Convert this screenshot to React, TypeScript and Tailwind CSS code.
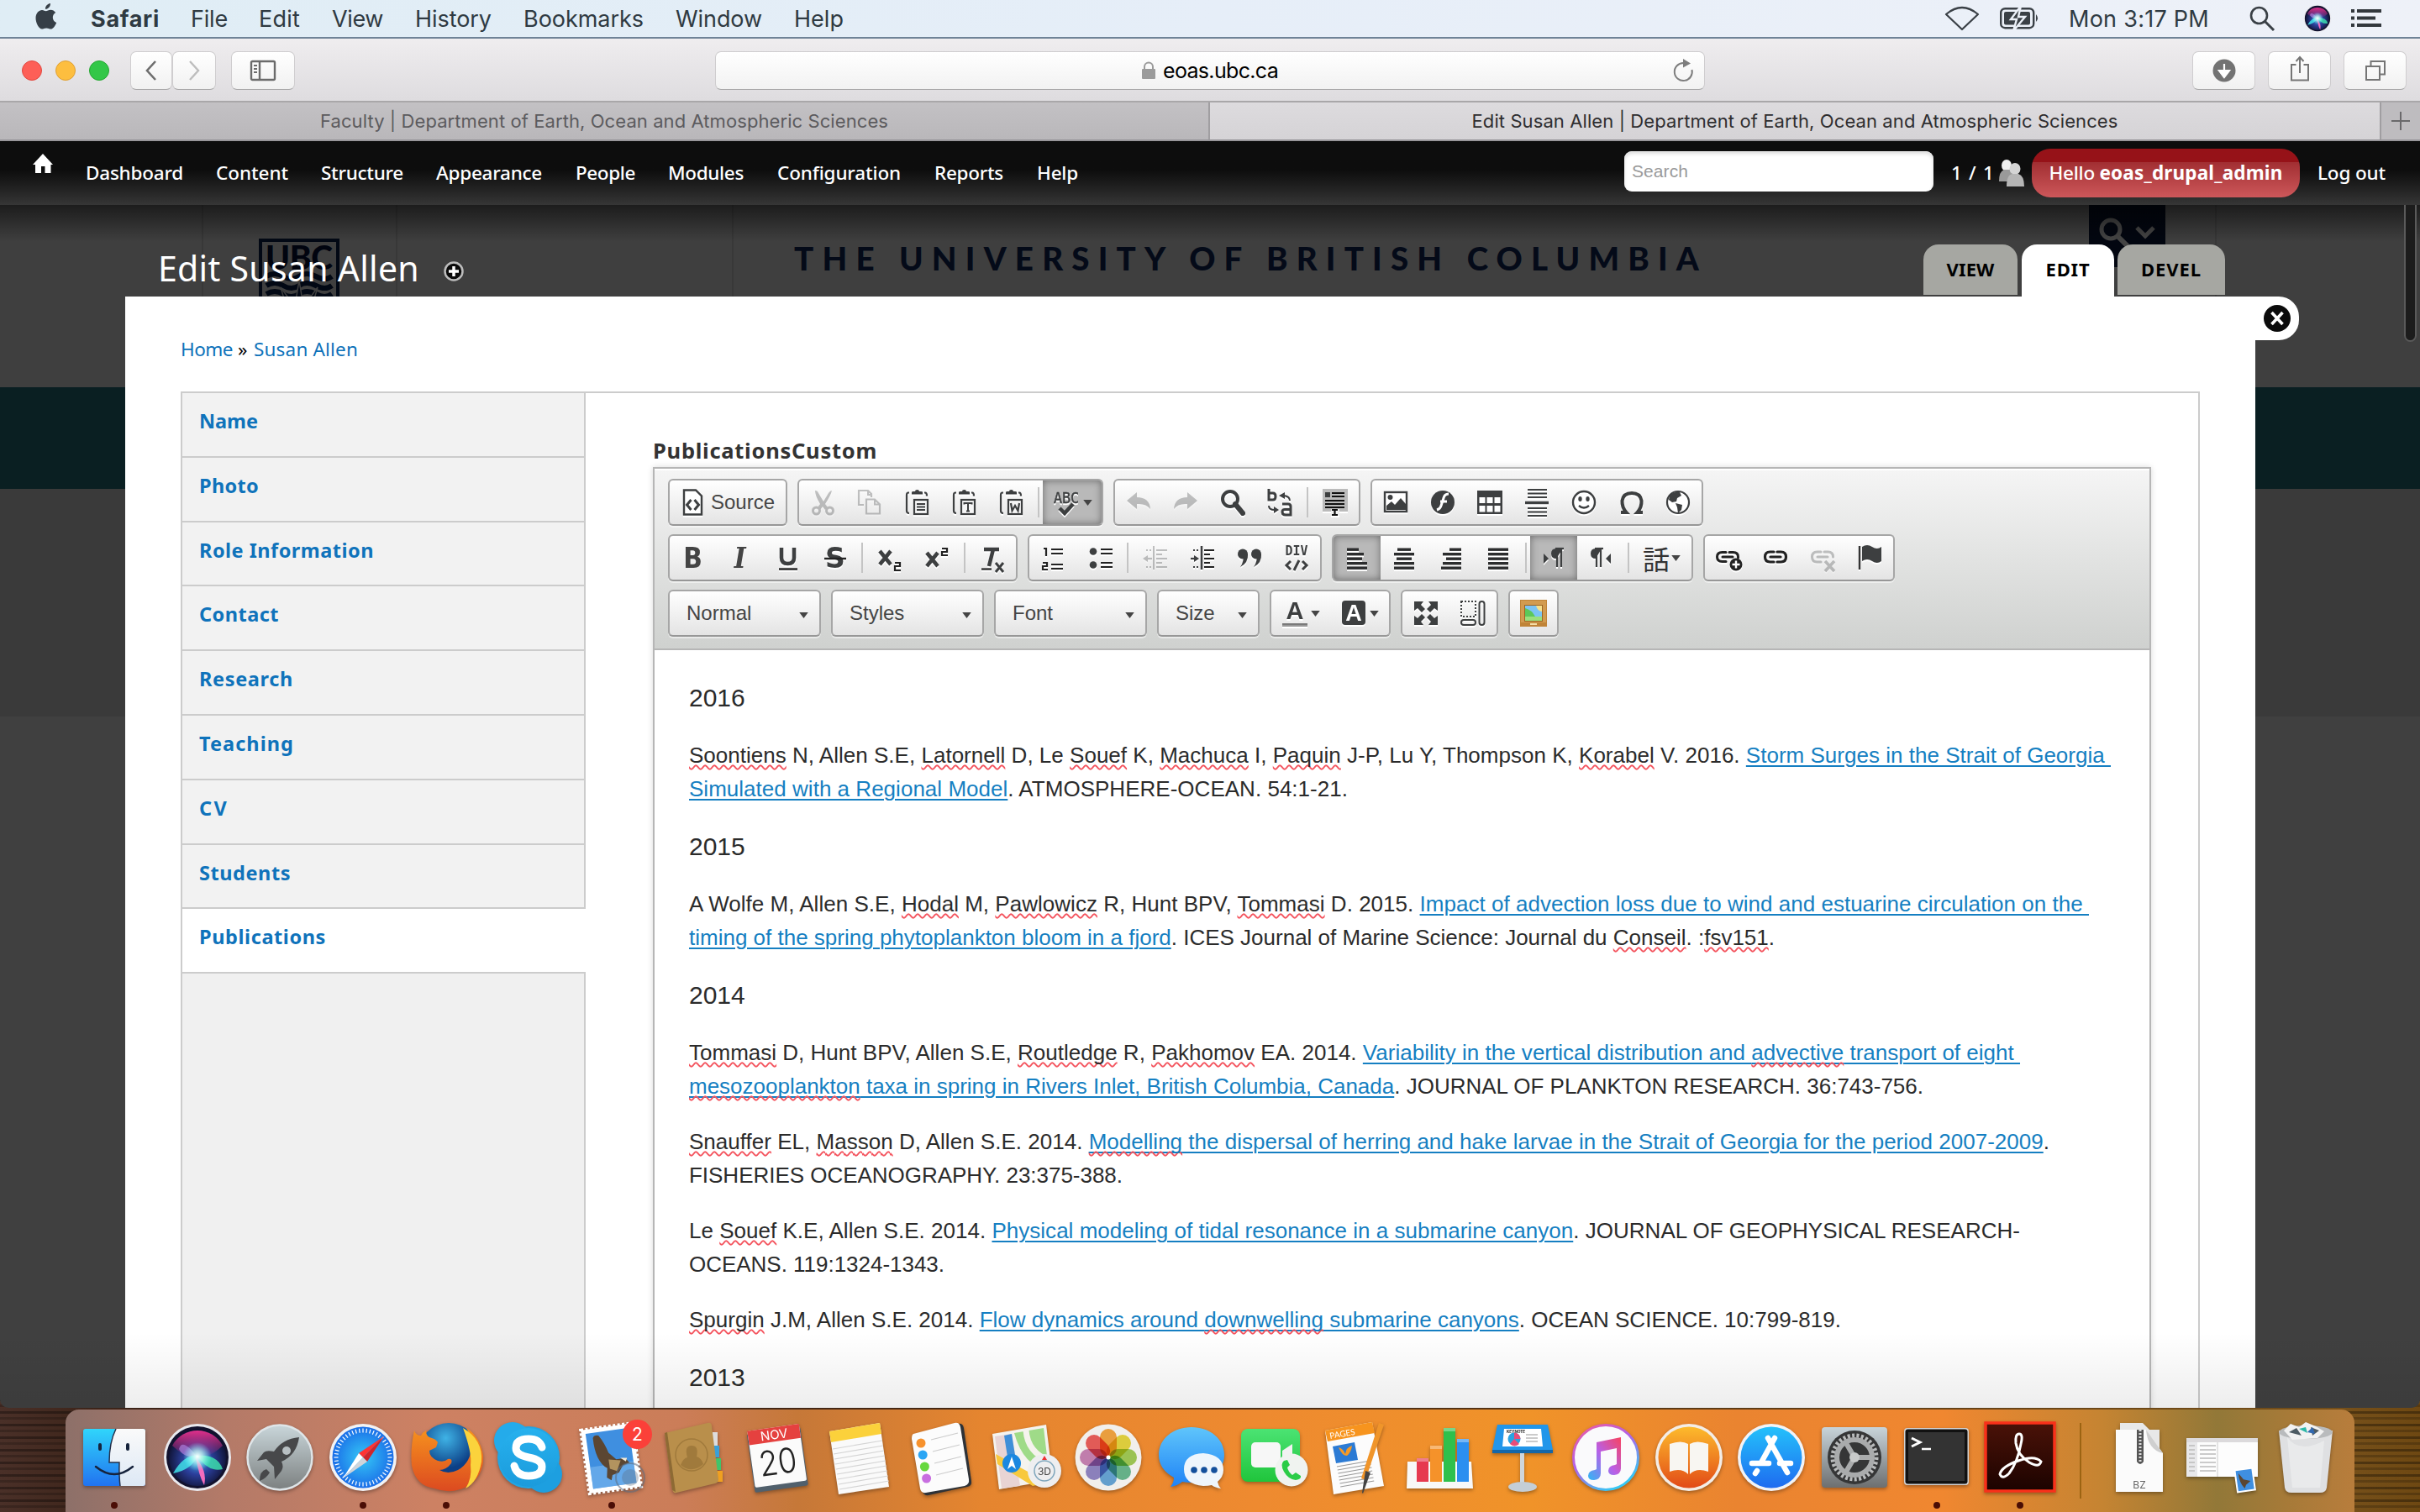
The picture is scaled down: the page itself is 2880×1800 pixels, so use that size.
import React, { useLayoutEffect, useRef, useState } from 'react';

const SF = "[font-family:Inter,'Liberation_Sans',sans-serif]";
const LUCIDA = "[font-family:'Noto_Sans','DejaVu_Sans',sans-serif]";
const HELV = "[font-family:'Liberation_Sans',Arial,sans-serif]";

/** A single line of text whose tracking is adjusted so it fills a given width. */
function Fit({ w, className = '', children }: { w: number; className?: string; children: React.ReactNode }) {
  const ref = useRef<HTMLSpanElement>(null);
  const [spacing, setSpacing] = useState(0);
  useLayoutEffect(() => {
    const el = ref.current;
    if (!el) return;
    const chars = (el.textContent || '').length;
    el.style.letterSpacing = '0px';
    const natural = el.getBoundingClientRect().width;
    setSpacing((w - natural) / Math.max(1, chars));
    el.style.letterSpacing = `${(w - natural) / Math.max(1, chars)}px`;
  }, [w]);
  return (
    <span ref={ref} className={`inline-block whitespace-pre ${className}`} style={{ letterSpacing: spacing }}>
      {children}
    </span>
  );
}

/* ---------------------------------------------------------------- menu bar */

const menus: [string, number, number][] = [
  ['File', 44, 37],
  ['Edit', 49, 38],
  ['View', 61, 38],
  ['History', 91, 38],
  ['Bookmarks', 143, 38],
  ['Window', 103, 38],
  ['Help', 59, 0],
];

function SiriOrb({ className }: { className: string }) {
  return (
    <svg viewBox="0 0 88 88" className={className}>
      <defs>
        <radialGradient id="siriBg" cx="50%" cy="55%" r="55%">
          <stop offset="0" stopColor="#3fb6e8" />
          <stop offset=".45" stopColor="#2b3f9c" />
          <stop offset="1" stopColor="#0d0f2b" />
        </radialGradient>
        <linearGradient id="siriTop" x1="0" y1="0" x2="0" y2="1">
          <stop offset="0" stopColor="#e0308c" />
          <stop offset="1" stopColor="#e0308c" stopOpacity="0" />
        </linearGradient>
        <radialGradient id="siriGlow">
          <stop offset="0" stopColor="#fff" />
          <stop offset=".4" stopColor="#c8fff6" stopOpacity=".7" />
          <stop offset="1" stopColor="#7ff" stopOpacity="0" />
        </radialGradient>
      </defs>
      <circle cx="44" cy="44" r="40" fill="#e9e9ee" />
      <circle cx="44" cy="44" r="37" fill="#12122e" />
      <circle cx="44" cy="44" r="34" fill="url(#siriBg)" />
      <path d="M14 30a34 34 0 0 1 60 0q-14 14-30 14T14 30z" fill="url(#siriTop)" />
      <path d="M44 44Q26 20 22 34q4 10 22 10z" fill="#b58be8" opacity=".6" />
      <path d="M15 63q12-22 30-22-8 18-30 22z" fill="#3fe0e8" opacity=".85" />
      <path d="M44 42q24-2 30 16-18 4-30-16z" fill="#3fe8b0" opacity=".8" />
      <path d="M42 44q14 16 10 33-6-10-10-33z" fill="#ff6fc0" opacity=".95" />
      <circle cx="44" cy="43" r="17" fill="url(#siriGlow)" />
    </svg>
  );
}

function MenuBar() {
  return (
    <div className={`flex h-[46px] shrink-0 items-center border-b-2 border-[#6f8397] bg-linear-to-r from-[#dfedf5] via-[#e6eef8] to-[#eef1f8] text-[27px] leading-[44px] text-[#2f3a42] ${SF}`}>
      <svg viewBox="0 0 28 32" className="ml-[41px] h-8 w-7 -translate-y-0.5" fill="#363f47">
        <path d="M19 0c.3 3.600-2.700 7-6 6.800C12.600 3.500 15.800.3 19 0zM13.600 9.200c1.400 0 3.200-1.500 5.800-1.500 2.100 0 4.400 1.200 5.800 3.300-5 2.900-4.200 10 1 12-1.300 3.300-3.700 7.600-6.700 7.600-2 0-2.900-1.200-5.300-1.200s-3.500 1.200-5.300 1.200C5.400 30.600 1.500 23.700 1.500 17.600c0-6.200 3.900-9.700 7.500-9.700 2 0 3.600 1.300 4.600 1.300z" />
      </svg>
      <Fit w={82} className="ml-[39px] translate-y-px font-bold">Safari</Fit>
      <div className="ml-[37px] flex translate-y-px">
        {menus.map(([t, w, gap]) => (
          <div key={t} className="flex">
            <Fit w={w}>{t}</Fit>
            <span style={{ width: gap }} />
          </div>
        ))}
      </div>
      <div className="flex-1" />
      <svg viewBox="0 0 42 30" className="h-[30px] w-[42px]" fill="none" stroke="#3a4046" strokeWidth="2.200" strokeLinejoin="round">
        <path d="M2 10Q21-6 40 10L21 28z" />
      </svg>
      <svg viewBox="0 0 48 28" className="ml-[24px] h-7 w-12">
        <rect x="1.200" y="2.200" width="39" height="23" rx="5" fill="none" stroke="#3a4046" strokeWidth="2.400" />
        <rect x="5" y="6" width="31" height="15.500" rx="2" fill="#3a4046" />
        <path d="M43 9q4 4.500 0 9z" fill="#3a4046" />
        <path d="M25-1 13 15h7l-4 14 14-17h-8z" fill="#3a4046" stroke="#ebf0f8" strokeWidth="2.400" />
      </svg>
      <Fit w={167} className="ml-[34px] translate-y-px">Mon 3:17 PM</Fit>
      <svg viewBox="0 0 32 32" className="ml-[47px] h-8 w-8" fill="none" stroke="#3a4046" strokeWidth="2.600">
        <circle cx="12.500" cy="12.500" r="9.500" />
        <path d="M19.500 19.500 30 30" strokeWidth="3" />
      </svg>
      <SiriOrb className="ml-[32px] h-[36px] w-[36px]" />
      <svg viewBox="0 0 36 22" className="mr-[46px] ml-[22px] h-[22px] w-9" fill="#33383d">
        <path d="M0 0h4v4H0zM7 0h29v4H7zM0 8.500h4v4H0zM7 8.500h22v4H7zM0 17h4v4H0zM7 17h29v4H7z" />
      </svg>
    </div>
  );
}

/* ---------------------------------------------------------- browser chrome */

function ChromeButton({ className, children }: { className: string; children: React.ReactNode }) {
  return (
    <div className={`flex h-[46px] items-center justify-center rounded-[7px] border border-[#cfcdcf] border-b-[#a8a7a8] bg-linear-to-b from-white to-[#f1f1f1] ${className}`}>
      {children}
    </div>
  );
}

function BrowserToolbar() {
  return (
    <div className="flex h-[76px] shrink-0 items-center border-b-2 border-[#a9a7a9] bg-linear-to-b from-[#efedef] to-[#dedcdf] pt-px">
      <div className="ml-[26px] flex gap-[16px]">
        <div className="h-6 w-6 rounded-full border border-[#e2473f] bg-[#fd5f57]" />
        <div className="h-6 w-6 rounded-full border border-[#dfa034] bg-[#fdbe3f]" />
        <div className="h-6 w-6 rounded-full border border-[#25a732] bg-[#33c748]" />
      </div>
      <ChromeButton className="ml-[25px] w-[50px]">
        <svg viewBox="0 0 16 26" className="h-[26px] w-4" fill="none" stroke="#6e6e6e" strokeWidth="2.600"><path d="M13 2 3 13l10 11" /></svg>
      </ChromeButton>
      <ChromeButton className="w-[52px]">
        <svg viewBox="0 0 16 26" className="h-[26px] w-4" fill="none" stroke="#bdbdbd" strokeWidth="2.400"><path d="m3 2 10 11L3 24" /></svg>
      </ChromeButton>
      <ChromeButton className="ml-[18px] w-[76px]">
        <svg viewBox="0 0 32 26" className="h-[26px] w-8" fill="none" stroke="#6b6b6b" strokeWidth="2.400">
          <rect x="2" y="2" width="28" height="22" rx="1.500" />
          <path d="M12 2v22" />
          <path d="M5 7h4M5 11h4M5 15h4" strokeWidth="2" />
        </svg>
      </ChromeButton>
      <div className="ml-[500px] flex h-[46px] w-[1178px] items-center rounded-[7px] border border-[#cfcdcf] border-b-[#a8a7a8] bg-linear-to-b from-white to-[#f2f2f2]">
        <svg viewBox="0 0 18 22" className="ml-[506px] h-[22px] w-[18px]">
          <path d="M4 10V6.500a5 5 0 0 1 10 0V10" fill="none" stroke="#9b9b9b" strokeWidth="2" />
          <rect x="1" y="9" width="16" height="12" rx="1" fill="#9b9b9b" />
        </svg>
        <Fit w={137} className={`ml-[8px] translate-y-px text-[25px] leading-none text-black ${SF}`}>eoas.ubc.ca</Fit>
        <div className="flex-1" />
        <svg viewBox="0 0 26 30" className="mr-[11px] h-[30px] w-[26px]">
          <path d="M22.500 14A10.500 10.500 0 1 1 12.500 6" fill="none" stroke="#7d7d7d" strokeWidth="2" />
          <path d="m12 1 9 5.500-9 5z" fill="#7d7d7d" />
        </svg>
      </div>
      <div className="flex-1" />
      <ChromeButton className="mr-[15px] w-[75px]">
        <svg viewBox="0 0 28 28" className="h-7 w-7"><circle cx="14" cy="14" r="13.500" fill="#737373" /><path d="M14 6v11M14 22l-6-8h12z" fill="#fff" stroke="#fff" strokeWidth="2.200" /></svg>
      </ChromeButton>
      <ChromeButton className="mr-[15px] w-[75px]">
        <svg viewBox="0 0 24 32" className="h-8 w-6 -translate-y-0.5" fill="none" stroke="#757575" strokeWidth="2"><path d="M7.500 11H2v18.500h20V11h-5.500M12 21V2M7.500 7 12 2l4.500 5" /></svg>
      </ChromeButton>
      <ChromeButton className="mr-[16px] w-[75px]">
        <svg viewBox="0 0 26 26" className="h-[26px] w-[26px]" fill="none" stroke="#757575" strokeWidth="2"><path d="M2 8h16v16H2zM7.500 7V2H24v15.500h-5" /></svg>
      </ChromeButton>
    </div>
  );
}

function TabBar() {
  return (
    <div className={`flex h-[46px] shrink-0 border-b-2 border-[#98969a] text-[22px] leading-[44px] ${SF}`}>
      <div className="flex w-[1440px] justify-center border-r-2 border-[#a09ea1] bg-linear-to-b from-[#c3c1c4] to-[#b9b7ba] text-[#5c5b5e]">
        <Fit w={676}>Faculty | Department of Earth, Ocean and Atmospheric Sciences</Fit>
      </div>
      <div className="flex w-[1392px] justify-center bg-linear-to-b from-[#dddbde] to-[#d5d3d6] text-[#2f2e30]">
        <Fit w={769}>Edit Susan Allen | Department of Earth, Ocean and Atmospheric Sciences</Fit>
      </div>
      <div className="flex w-12 items-center justify-center border-l-2 border-[#a09ea1] bg-[#bebcbf]">
        <svg viewBox="0 0 22 22" className="h-[22px] w-[22px]" stroke="#6a696b" strokeWidth="2"><path d="M11 0v22M0 11h22" /></svg>
      </div>
    </div>
  );
}

/* --------------------------------------------------------------- admin bar */

const adminLinks: [string, number, number][] = [
  ['Dashboard', 116, 39],
  ['Content', 86, 39],
  ['Structure', 98, 39],
  ['Appearance', 126, 40],
  ['People', 71, 39],
  ['Modules', 90, 40],
  ['Configuration', 147, 40],
  ['Reports', 82, 40],
  ['Help', 49, 0],
];

function AdminBar() {
  return (
    <div className={`flex h-[76px] shrink-0 items-center bg-linear-to-b from-[#0d0d0d] from-45% to-[#363636] text-[22.500px] leading-[36px] font-medium text-white ${LUCIDA}`}>
      <svg viewBox="0 0 26 24" className="ml-[38px] h-6 w-[26px] -translate-y-[11px]" fill="#fff"><path d="M13 0 25 13h-2.500v10H15.500V15h-4.500v8H4V13H1z" /></svg>
      <div className="ml-[38px] flex">
        {adminLinks.map(([t, w, gap]) => (
          <div key={t} className="flex">
            <Fit w={w}>{t}</Fit>
            <span style={{ width: gap }} />
          </div>
        ))}
      </div>
      <div className="flex-1" />
      <div className="mb-1 flex h-12 w-[368px] items-center rounded-[9px] bg-white pl-[9px] shadow-[inset_0_3px_4px_#ddd]">
        <Fit w={67} className={`text-[21px] font-normal text-[#9a9a9a] ${HELV}`}>Search</Fit>
      </div>
      <Fit w={52} className="ml-[21px]">1 / 1</Fit>
      <svg viewBox="0 0 32 34" className="ml-[4px] h-[34px] w-8" fill="#d4d4d4">
        <ellipse cx="10" cy="8" rx="6" ry="7" fill="#f0f0f0" />
        <path d="M1 27q0-12 6-14h6q5 3 5 14z" fill="#9a9a9a" />
        <ellipse cx="20" cy="12" rx="6.500" ry="7" />
        <path d="M10 33q0-14 7-15h7q7 2 7 15z" fill="#b5b5b5" />
      </svg>
      <div className="ml-[8px] flex h-[58px] w-[319px] items-center justify-center rounded-[22px] bg-linear-to-b from-[#961218] from-27% via-[#a12e32] via-27% to-[#cd575a]">
        <Fit w={60}>Hello </Fit>
        <Fit w={218} className="font-bold">eoas_drupal_admin</Fit>
      </div>
      <Fit w={81} className="mr-[41px] ml-[21px]">Log out</Fit>
    </div>
  );
}

/* ---------------------------------------------------- darkened page behind */

function Backdrop() {
  return (
    <div className="flex h-full flex-col">
      <div className="flex h-[217px] bg-[#3f3f3f]">
        <div className="w-[242px] border-r-2 border-[#383838]" />
        <div className="w-[231px] border-r-2 border-[#383838] pt-10 pl-[66px]">
          <svg viewBox="0 0 96 100" className="h-[100px] w-24">
            <path d="M2 100V2h92v98" fill="none" stroke="#020814" strokeWidth="4" />
            <text x="48" y="37" textAnchor="middle" fontFamily="Lato" fontWeight="900" fontSize="39" textLength="80" fill="#01040f">UBC</text>
            <path d="M9 45q10-6 20 0t19 0 20 0 19 0M9 56q10-6 20 0t19 0 20 0 19 0M9 66q10-6 20 0t19 0 20 0 19 0" fill="none" stroke="#020814" strokeWidth="6" />
            <path d="M48 50l5 30H43zM26 58l16 22-9 2zM70 58 54 80l9 2z" fill="#020814" stroke="#3f3f3f" strokeWidth="1.500" />
          </svg>
        </div>
        <div className="w-[400px] border-r-2 border-[#383838]" />
        <div className="flex flex-1 items-start">
          <Fit w={1087} className="mt-[43px] ml-[72px] text-[38.500px] leading-[40px] font-black text-[#040a18] [font-family:Lato,sans-serif]">THE UNIVERSITY OF BRITISH COLUMBIA</Fit>
        </div>
        <div className="flex h-[74px] w-[91px] items-center gap-[7px] bg-[#020610] pl-3">
          <svg viewBox="0 0 36 36" className="h-9 w-9 -translate-y-1" fill="none" stroke="#454545" strokeWidth="5"><circle cx="14" cy="14" r="11" /><path d="m22 22 12 12" strokeWidth="6" /></svg>
          <svg viewBox="0 0 24 16" className="h-4 w-6 -translate-y-1" fill="none" stroke="#454545" strokeWidth="5"><path d="m2 2 10 10L22 2" /></svg>
        </div>
        <div className="w-[61px] border-r-2 border-[#383838]" />
        <div className="w-[242px]" />
      </div>
      <div className="h-[121px] bg-[#0a1f22]" />
      <div className="h-[271px] bg-[#3a3a3a]" />
      <div className="flex-1 bg-[#404040]" />
    </div>
  );
}

/* ------------------------------------------------------------ editor icons */

const D = '#3d3f40';

function Icon({ children, dim = false, className = 'h-8 w-8' }: { children: React.ReactNode; dim?: boolean; className?: string }) {
  return (
    <svg viewBox="0 0 32 32" className={`${className} shrink-0 overflow-visible drop-shadow-[0_2px_0_#fff] ${dim ? 'opacity-30' : ''}`} fill={D} stroke="none">
      {children}
    </svg>
  );
}

const clip = (
  <>
    <path d="M7 4.500H6q-2 0-2 3V26q0 3 3 3M25 4.500h1q2 0 2 4" fill="none" stroke={D} strokeWidth="2.200" />
    <path d="M10 6.500V4q0-1 2-1h2q0-2 2.500-2T19 3h2q2 0 2 1v2.500z" />
    <rect x="13" y="13" width="16" height="17" fill="#f6f6f6" stroke={D} strokeWidth="2.200" />
  </>
);

const bars = (rows: [number, number][]) =>
  rows.map(([x, w], i) => <rect key={i} x={x} y={4.500 + i * 5.500} width={w} height="3.400" fill="#2c2d2e" />);

const icons: Record<string, React.ReactNode> = {
  cut: <Icon dim><path d="M7 2q3 0 4 3l6 10 6-10q2-3 4-3-1 5-8 16l3 4-3 3-3-4-3 4-3-3 3-4Q7 8 7 2z" /><circle cx="8.500" cy="26" r="4" fill="none" stroke={D} strokeWidth="3" /><circle cx="24.500" cy="26" r="4" fill="none" stroke={D} strokeWidth="3" /></Icon>,
  copy: <Icon dim><path d="M18 10V6l-4-4H3v17h6M12 29.500V12.500h10l6 6v11z" fill="none" stroke={D} strokeWidth="2.200" /><path d="M14 2v5h5M22 12.500v6h6" fill="none" stroke={D} strokeWidth="2" /></Icon>,
  paste: <Icon>{clip}<path d="M16 18h10M16 21.500h10M16 25h10" stroke={D} strokeWidth="2" /></Icon>,
  pasteText: <Icon>{clip}<path d="M16.500 18.500V17h9v1.500M21 17v9.500M19 26.500h4" fill="none" stroke={D} strokeWidth="2" /></Icon>,
  pasteWord: <Icon>{clip}<path d="M16 17l1.500 9 3.500-6 3.500 6 1.500-9" fill="none" stroke={D} strokeWidth="2.200" /></Icon>,
  undo: <Icon dim><path d="M2 14 14 4v6q15 0 16 14-5-7-16-6v6z" /></Icon>,
  redo: <Icon dim><path d="M30 14 18 4v6Q3 10 2 24q5-7 16-6v6z" /></Icon>,
  find: <Icon><circle cx="13" cy="12" r="9" fill="none" stroke={D} strokeWidth="4" /><path d="m19 18 9 11" stroke={D} strokeWidth="6" strokeLinecap="round" /></Icon>,
  replace: <Icon><path d="M3 0v13h5q3 0 3-4T8 5H3" fill="none" stroke={D} strokeWidth="3" /><path d="M19 18h7q3 0 3 3v10h-6q-4 0-4-3.500t4-3h6" fill="none" stroke={D} strokeWidth="3" /><path d="M28 14q0-5-7-6M3 20q0 5 7 5" fill="none" stroke={D} strokeWidth="2" /><path d="m15 8 7-4v8zM15 25l-6-4v8z" /></Icon>,
  selectAll: <Icon><path d="M1 0h30v27H1z" fill="#bbb" /><path d="M4 4h6v6H4z" /><path d="M12 5h15M12 9h15M4 14h23M4 18h23M4 22h23" stroke="#111" strokeWidth="2.200" /><path d="M11 24h10v8H11z" fill="#eee" /><path d="M12 25h7M12 31h7M15.500 25v6" stroke="#111" strokeWidth="2.200" /></Icon>,
  image: <Icon><rect x="3" y="4" width="26" height="23" fill="#fff" stroke={D} strokeWidth="2.400" /><circle cx="9.500" cy="10" r="3" /><path d="M5 25v-5l6-5 4 4 7-8 6 7v7z" /></Icon>,
  flash: <Icon><circle cx="16" cy="16" r="14" /><path d="M23 6q-5 0-6 5l-3 9q-1 4-5 5M13 15h8" fill="none" stroke="#fff" strokeWidth="3" /></Icon>,
  table: <Icon><path d="M1 2h30v28H1z" /><path d="M3.500 10h7v7h-7zM12.500 10h7v7h-7zM21.500 10h7v7h-7zM3.500 20h7v7.500h-7zM12.500 20h7v7.500h-7zM21.500 20h7v7.500h-7z" fill="#fff" /></Icon>,
  hr: <Icon><path d="M5 1h23M5 5.500h23M5 10h23M5 23h23M5 27.500h23M5 32h23" stroke={D} strokeWidth="2" /><path d="M2 16.500h28" stroke={D} strokeWidth="3.400" /></Icon>,
  smiley: <Icon><circle cx="16" cy="16" r="13" fill="#fff" stroke={D} strokeWidth="2.400" /><ellipse cx="11.500" cy="12" rx="2.200" ry="3" /><ellipse cx="20.500" cy="12" rx="2.200" ry="3" /><path d="M10 20q6 5 12 0" fill="none" stroke={D} strokeWidth="2.400" /></Icon>,
  omega: <Icon><path d="M4 28h6.500Q5 22 5.500 14 7 5 17 5t11.500 9q.5 8-5 14H30" fill="none" stroke={D} strokeWidth="4" /></Icon>,
  globe: <Icon><circle cx="16" cy="16" r="13" fill="#fff" stroke={D} strokeWidth="2.200" /><path d="M6 8q5-5 12-4l2 4-5 3-1 4-5 1-4-3zM13 17l8 2-1 6-4 4-1-7z" /></Icon>,
  bold: <span className="inline-block scale-x-90 text-[33px] leading-none font-bold text-[#444] [font-family:'DejaVu_Sans']">B</span>,
  italic: <span className="inline-block scale-x-90 text-[33px] leading-none font-bold text-[#444] italic [font-family:'DejaVu_Serif']">I</span>,
  underline: <Icon><path d="M9 4v12q0 7 7.500 7t7.500-7V4" fill="none" stroke={D} strokeWidth="4.500" /><path d="M6 29.500h22" stroke="#222" strokeWidth="2.400" /></Icon>,
  strike: <Icon><text x="17" y="28" textAnchor="middle" fontFamily="DejaVu Sans" fontWeight="700" fontSize="33">S</text><path d="M4 17h26" stroke="#222" strokeWidth="2.400" /></Icon>,
  sub: <Icon><path d="m4 8 13 16M17 8 4 24" stroke={D} strokeWidth="4.500" /><path d="M22 22h6v4h-6v5h7" fill="none" stroke="#222" strokeWidth="2.200" /></Icon>,
  sup: <Icon><path d="m4 10 13 16M17 10 4 26" stroke={D} strokeWidth="4.500" /><path d="M22 5h6v4h-6v4h7" fill="none" stroke="#222" strokeWidth="2.200" /></Icon>,
  removeFormat: <Icon><path d="M6 6h18M17 6l-5 20" fill="none" stroke={D} strokeWidth="4.500" /><path d="M3 29.500h12" stroke="#222" strokeWidth="2.200" /><path d="m20 22 9 11M29 22l-9 11" stroke={D} strokeWidth="3" /></Icon>,
  ol: <Icon><path d="M14 6h14M14 11h14M14 24h14M14 29h14" stroke="#222" strokeWidth="2.200" /><path d="M5 5h3v9M4 22h5v4H4v4h6" fill="none" stroke="#222" strokeWidth="2.200" /></Icon>,
  ul: <Icon><path d="M17 6h14M17 11h14M17 22h14M17 27h14" stroke="#222" strokeWidth="2.200" /><circle cx="8" cy="8.500" r="4.300" /><circle cx="8" cy="24.500" r="4.300" /></Icon>,
  outdent: <Icon dim><path d="M14 2v28" stroke={D} strokeWidth="2" /><path d="M17 7h13M17 12h7M17 17h13M17 22h7M17 27h13" stroke={D} strokeWidth="2.200" /><path d="M5 7h7M5 27h7" stroke={D} strokeWidth="2" strokeDasharray="2 2" /><path d="M12 17H4" stroke={D} strokeWidth="2.200" /><path d="m1 17 6-4v8z" /></Icon>,
  indent: <Icon><path d="M15 2v28" stroke={D} strokeWidth="2.500" /><path d="M18 7h12M18 12h7M18 17h12M18 22h7M18 27h12" stroke="#222" strokeWidth="2.200" /><path d="M5 7h7M5 27h7" stroke={D} strokeWidth="2" strokeDasharray="2 2" /><path d="M2 17h7" stroke={D} strokeWidth="2.200" /><path d="m12 17-6-4v8z" /></Icon>,
  quote: <Icon><circle cx="8" cy="11.500" r="6" /><path d="M14 11q1 11-9 16 5-7 3-14z" /><circle cx="24" cy="11.500" r="6" /><path d="M30 11q1 11-9 16 5-7 3-14z" /></Icon>,
  div: <Icon><text x="16" y="13" textAnchor="middle" fontFamily="DejaVu Sans Mono" fontWeight="700" fontSize="16" textLength="27" lengthAdjust="spacingAndGlyphs">DIV</text><path d="m9 20-5 5 5 5M23 20l5 5-5 5M19 19l-6 12" fill="none" stroke={D} strokeWidth="3" /></Icon>,
  left: <Icon>{bars([[4, 14], [4, 20], [4, 18], [4, 24], [4, 24]])}</Icon>,
  center: <Icon>{bars([[8, 16], [4, 24], [7, 18], [4, 24], [4, 24]])}</Icon>,
  right: <Icon>{bars([[14, 14], [6, 22], [10, 18], [6, 22], [4, 24]])}</Icon>,
  justify: <Icon>{bars([[4, 24], [4, 24], [4, 24], [4, 24], [4, 24]])}</Icon>,
  ltr: <Icon><path d="m4 11 6 6-6 6z" /><path d="M27 5H19q-6 0-6 6t6 6z" /><path d="M20 6v21M25 6v21" stroke={D} strokeWidth="2.200" /><path d="M18 5h10" stroke={D} strokeWidth="2.200" /></Icon>,
  rtl: <Icon><path d="m28 11-6 6 6 6z" /><path d="M17 5H10q-6 0-6 6t6 6z" /><path d="M11 6v21M16 6v21" stroke={D} strokeWidth="2.200" /><path d="M9 5h10" stroke={D} strokeWidth="2.200" /></Icon>,
  linkAdd: <Icon><path d="M13 9.500H8.500q-6 0-6 5.500t6 5.500H13M17 9.500h4.500q6 0 6 5.500v1M9 15h12" fill="none" stroke="#222" strokeWidth="3" strokeLinecap="round" /><circle cx="25" cy="24" r="7.500" fill="#222" /><path d="M25 19.500v9M20.500 24h9" stroke="#fff" strokeWidth="2.400" /></Icon>,
  link: <Icon><path d="M14 9H9.500q-6 0-6 6t6 6H14M18 9h4.500q6 0 6 6t-6 6H18M10 15h12" fill="none" stroke="#222" strokeWidth="3.200" strokeLinecap="round" /></Icon>,
  unlink: <Icon dim><path d="M14 9H9.500q-6 0-6 6t6 6H14M18 9h4.500q6 0 6 6M10 15h12" fill="none" stroke={D} strokeWidth="3" strokeLinecap="round" /><path d="m19 20 11 12M30 20 19 32" stroke={D} strokeWidth="3.600" /></Icon>,
  flag: <Icon><path d="M4 2v28" stroke="#333" strokeWidth="2.400" /><path d="M7 3q6-4 12 0t11 0v17q-5 4-11 0T7 20z" /></Icon>,
  maximize: <Icon><path d="M2 2h11l-3 4 5 5-4 4-5-5-4 3zM30 2v11l-4-3-5 5-4-4 5-5-3-4zM2 30V19l4 3 5-5 4 4-5 5 3 4zM30 30H19l3-4-5-5 4-4 5 5 4-3z" /></Icon>,
  blocks: <Icon><path d="M2 2h17v18H2z" fill="none" stroke={D} strokeWidth="2" strokeDasharray="2 2" /><rect x="23.500" y="2" width="6" height="28" rx="3" fill="none" stroke={D} strokeWidth="2" /><rect x="2" y="24" width="17" height="6" rx="3" fill="none" stroke={D} strokeWidth="2" /></Icon>,
  picture: (
    <svg viewBox="0 0 32 32" className="h-8 w-8">
      <rect width="32" height="32" fill="#c08438" /><rect x="1" y="1" width="30" height="26" fill="#d29b50" />
      <rect x="5" y="6" width="22" height="20" fill="#9b6423" /><rect x="6" y="7" width="20" height="18" fill="#7cc4f4" />
      <path d="M6 10q8 2 12 10l8 0v5H6z" fill="#5cc85a" /><path d="M19 7h7v7q-5 0-7-7z" fill="#f6e08c" /><path d="M6 20h20v5H6z" fill="#9be07c" /><path d="M12 28h8v2h-8z" fill="#f5dfa8" />
    </svg>
  ),
};

function Caret({ className = '' }: { className?: string }) {
  return <svg viewBox="0 0 12 8" className={`h-[7px] w-[11px] ${className}`} fill="#444"><path d="M0 0h12L6 8z" /></svg>;
}

function Group({ children, className = '' }: { children: React.ReactNode; className?: string }) {
  return (
    <div className={`flex h-14 items-center overflow-hidden rounded-[6px] border-2 border-[#a6a6a6] border-b-[#979797] bg-linear-to-b from-white to-[#e4e4e4] shadow-[0_2px_0_#ffffff80] ${className}`}>
      {children}
    </div>
  );
}

const ON = 'bg-[#b9b9b9] shadow-[inset_0_0_10px_#6b6b6b]';

function Btn({ id, on = false }: { id: string; on?: boolean }) {
  return <div className={`flex h-[52px] w-14 items-center justify-center ${on ? ON : ''}`}>{icons[id]}</div>;
}

function Sep() {
  return <div className="mx-1 h-9 w-0.5 bg-[#c4c4c4]" />;
}

function Row({ items }: { items: string[] }) {
  return (
    <>
      {items.map((id, i) => (id === '|' ? <Sep key={i} /> : <Btn key={i} id={id.replace('*', '')} on={id.startsWith('*')} />))}
    </>
  );
}

function Combo({ label, className = 'w-[182px]' }: { label: string; className?: string }) {
  return (
    <Group className={`justify-between pr-[13px] pl-5 text-2xl text-[#454545] ${className}`}>
      <span>{label}</span>
      <Caret className="translate-y-0.5" />
    </Group>
  );
}

function EditorToolbar() {
  return (
    <div className={`flex h-[216px] flex-col gap-2.5 border-b-2 border-[#b6b6b6] bg-linear-to-b from-[#f5f5f5] to-[#cfd1cf] pt-3 pl-4 shadow-[inset_0_2px_0_#fff] ${HELV}`}>
      <div className="flex gap-3">
        <Group className="w-[142px] gap-[9px] pl-[12px] text-2xl text-[#454545]">
          <Icon>
            <path d="M5 1.500h14l7 7v22H5z" fill="#fff" stroke={D} strokeWidth="2.400" />
            <path d="m13.500 13-5 6 5 6M17.500 13l5 6-5 6" fill="none" stroke={D} strokeWidth="3" />
          </Icon>
          <span className="-ml-1">Source</span>
        </Group>
        <Group>
          <Row items={['cut', 'copy', 'paste', 'pasteText', 'pasteWord', '|']} />
          <div className={`flex h-[52px] w-[70px] items-center pl-3 ${ON}`}>
            <Icon className="h-8 w-8">
              <text x="16" y="17" textAnchor="middle" fontFamily="DejaVu Sans Mono" fontWeight="400" stroke={D} strokeWidth=".5" fontSize="18" textLength="30" lengthAdjust="spacingAndGlyphs">ABC</text>
              <path d="m8 23 6 6 10-11" fill="none" stroke={D} strokeWidth="4.500" />
            </Icon>
            <Caret className="ml-1" />
          </div>
        </Group>
        <Group><Row items={['undo', 'redo', 'find', 'replace', '|', 'selectAll']} /></Group>
        <Group><Row items={['image', 'flash', 'table', 'hr', 'smiley', 'omega', 'globe']} /></Group>
      </div>
      <div className="flex gap-3">
        <Group><Row items={['bold', 'italic', 'underline', 'strike', '|', 'sub', 'sup', '|', 'removeFormat']} /></Group>
        <Group><Row items={['ol', 'ul', '|', 'outdent', 'indent', 'quote', 'div']} /></Group>
        <Group>
          <Row items={['*left', 'center', 'right', 'justify', '|', '*ltr', 'rtl', '|']} />
          <div className="flex h-[52px] w-[70px] items-center pl-3">
            <span className="text-[32px] leading-none text-[#333] [font-family:'Noto_Sans_CJK_JP',sans-serif]">話</span>
            <Caret className="ml-0.5 shrink-0" />
          </div>
        </Group>
        <Group><Row items={['linkAdd', 'link', 'unlink', 'flag']} /></Group>
      </div>
      <div className="flex gap-3">
        <Combo label="Normal" />
        <Combo label="Styles" />
        <Combo label="Font" />
        <Combo label="Size" className="w-[122px]" />
        <Group>
          <div className="flex w-[70px] items-center pl-3">
            <Icon><text x="16" y="23" textAnchor="middle" fontFamily="Liberation Sans" fontWeight="700" fontSize="29">A</text><path d="M1 29h30" stroke="#555" strokeWidth="1.500" /><path d="M1 31h30" stroke="#999" strokeWidth="2" /></Icon>
            <Caret className="ml-[3px]" />
          </div>
          <div className="flex w-[70px] items-center pl-3">
            <Icon><rect x="2" y="1" width="28" height="29" rx="4" /><text x="16" y="25" textAnchor="middle" fontFamily="Liberation Sans" fontWeight="700" fontSize="27" fill="#fff">A</text></Icon>
            <Caret className="ml-[3px]" />
          </div>
        </Group>
        <Group><Row items={['maximize', 'blocks']} /></Group>
        <Group><Row items={['picture']} /></Group>
      </div>
    </div>
  );
}

/* ---------------------------------------------------------- editor content */

/** Word flagged by the spell checker. */
function S({ children }: { children: React.ReactNode }) {
  return <span className="underline decoration-[#f4555f] decoration-wavy decoration-[1.500px] underline-offset-[2px] [text-decoration-skip-ink:none]">{children}</span>;
}

function A({ children }: { children: React.ReactNode }) {
  return <span className="text-[#157fc2] underline decoration-2 underline-offset-[3px]">{children}</span>;
}

function Year({ children }: { children: React.ReactNode }) {
  return <h2 className="mb-[27px] pt-px text-[30px] leading-[43px]">{children}</h2>;
}

function P({ children }: { children: React.ReactNode }) {
  return <div className="mb-[26px] flex flex-col items-start">{children}</div>;
}

function Publications() {
  return (
    <div className={`flex-1 overflow-hidden bg-white pt-[34px] pl-[41px] text-[26px] leading-[40px] text-[#2b2b2b] ${HELV}`}>
      <Year>2016</Year>
      <P>
        <Fit w={1692}><S>Soontiens</S> N, Allen S.E, <S>Latornell</S> D, Le <S>Souef</S> K, <S>Machuca</S> I, <S>Paquin</S> J-P, Lu Y, Thompson K, <S>Korabel</S> V. 2016. <A>Storm Surges in the Strait of Georgia </A></Fit>
        <Fit w={784}><A>Simulated with a Regional Model</A>. ATMOSPHERE-OCEAN. 54:1-21.</Fit>
      </P>
      <Year>2015</Year>
      <P>
        <Fit w={1666}>A Wolfe M, Allen S.E, <S>Hodal</S> M, <S>Pawlowicz</S> R, Hunt BPV, <S>Tommasi</S> D. 2015. <A>Impact of advection loss due to wind and estuarine circulation on the </A></Fit>
        <Fit w={1292}><A>timing of the spring phytoplankton bloom in a fjord</A>. ICES Journal of Marine Science: Journal du <S>Conseil</S>. :<S>fsv151</S>.</Fit>
      </P>
      <Year>2014</Year>
      <P>
        <Fit w={1584}><S>Tommasi</S> D, Hunt BPV, Allen S.E, <S>Routledge</S> R, <S>Pakhomov</S> EA. 2014. <A>Variability in the vertical distribution and <S>advective</S> transport of eight </A></Fit>
        <Fit w={1469}><A><S>mesozooplankton</S> taxa in spring in Rivers Inlet, British Columbia, Canada</A>. JOURNAL OF PLANKTON RESEARCH. 36:743-756.</Fit>
      </P>
      <P>
        <Fit w={1619}><S>Snauffer</S> EL, <S>Masson</S> D, Allen S.E. 2014. <A><S>Modelling</S> the dispersal of herring and hake larvae in the Strait of Georgia for the period 2007-2009</A>.</Fit>
        <Fit w={516}>FISHERIES OCEANOGRAPHY. 23:375-388.</Fit>
      </P>
      <P>
        <Fit w={1584}>Le <S>Souef</S> K.E, Allen S.E. 2014. <A>Physical modeling of tidal resonance in a submarine canyon</A>. JOURNAL OF GEOPHYSICAL RESEARCH-</Fit>
        <Fit w={304}>OCEANS. 119:1324-1343.</Fit>
      </P>
      <P>
        <Fit w={1371}><S>Spurgin</S> J.M, Allen S.E. 2014. <A>Flow dynamics around <S>downwelling</S> submarine canyons</A>. OCEAN SCIENCE. 10:799-819.</Fit>
      </P>
      <Year>2013</Year>
    </div>
  );
}

/* ------------------------------------------------------------ edit overlay */

const sections: [string, number][] = [
  ['Name', 70],
  ['Photo', 71],
  ['Role Information', 208],
  ['Contact', 95],
  ['Research', 112],
  ['Teaching', 113],
  ['CV', 35],
  ['Students', 109],
];

function Overlay() {
  return (
    <div className={`absolute inset-0 flex flex-col ${LUCIDA}`}>
      <div className="flex h-[109px] items-end bg-linear-to-b from-black/55 to-transparent to-40%">
        <div className="flex h-full flex-1 items-center pt-[42px] pl-[188px]">
          <Fit w={311} className="text-[41px] leading-none text-white">Edit Susan Allen</Fit>
          <svg viewBox="0 0 24 24" className="mt-1.5 ml-[29px] h-6 w-6"><circle cx="12" cy="12" r="10.500" fill="#0a0a0a" stroke="#bdbdbd" strokeWidth="2.500" /><path d="M12 6v12M6 12h12" stroke="#fff" strokeWidth="3.500" /></svg>
        </div>
        <div className="mr-[232px] flex items-start gap-[4px] text-[22px] leading-[59px] font-bold text-black">
          <div className="flex h-[60px] w-[112px] justify-center rounded-t-[18px] bg-[#a6a7a2]"><Fit w={57}>VIEW</Fit></div>
          <div className="ml-px flex h-[62px] w-[110px] justify-center rounded-t-[18px] bg-white"><Fit w={53}>EDIT</Fit></div>
          <div className="flex h-[60px] w-[128px] justify-center rounded-t-[18px] bg-[#a6a7a2]"><Fit w={72}>DEVEL</Fit></div>
        </div>
      </div>
      <div className="flex flex-1 items-start pl-[149px]">
        <div className="flex h-[1323px] w-[2535px] flex-col bg-white px-[66px]">
          <div className="flex pt-[47px] text-[22.500px] leading-[32px] text-[#0e72ba]">
            <Fit w={62}>Home</Fit>
            <Fit w={13} className="mx-[6px] text-black">»</Fit>
            <Fit w={124}>Susan Allen</Fit>
          </div>
          <div className="mt-[34px] flex flex-1 border-2 border-b-0 border-[#cccccc]">
            <div className="flex w-[480px] flex-col">
              {sections.map(([t, w]) => (
                <div key={t} className="h-[76.800px] border-r-2 border-b-2 border-[#cccccc] bg-[#f2f2f2] pt-[17px] pl-5 text-[23.500px] leading-[32px] font-bold text-[#0f73bb]">
                  <Fit w={w}>{t}</Fit>
                </div>
              ))}
              <div className="h-[76.800px] border-b-2 border-[#cccccc] pt-[17px] pl-5 text-[23.500px] leading-[32px] font-bold text-[#0f73bb]">
                <Fit w={151}>Publications</Fit>
              </div>
              <div className="flex-1 border-r-2 border-[#cccccc] bg-[#f0f0f0]" />
            </div>
            <div className="flex flex-1 flex-col pt-[48px] pr-[56px] pl-[80px]">
              <Fit w={267} className="self-start text-[25.500px] leading-[40px] font-bold text-[#333]">PublicationsCustom</Fit>
              <div className="flex flex-1 flex-col border-2 border-b-0 border-[#b6b6b6] shadow-[0_0_7px_#00000026]">
                <EditorToolbar />
                <Publications />
              </div>
            </div>
          </div>
        </div>
        <div className="flex h-[52px] w-[52px] items-center rounded-r-[24px] bg-white pl-[10px]">
          <svg viewBox="0 0 32 32" className="h-8 w-8"><circle cx="16" cy="16" r="16" fill="#0b0b0b" /><path d="m9.500 9 13 14M22.500 9l-13 14" stroke="#fff" strokeWidth="3.600" /></svg>
        </div>
      </div>
    </div>
  );
}

/* -------------------------------------------------------------------- dock */

function Art({ children }: { children: React.ReactNode }) {
  return <svg viewBox="0 0 88 88" className="h-[88px] w-[88px] overflow-visible drop-shadow-[0_2px_2px_#00000055]">{children}</svg>;
}

const ticks = Array.from({ length: 48 }, (_, i) => i * 7.500);
const petals = ['#f7a233', '#e8d732', '#9ccb4a', '#5fb68a', '#5da3dc', '#8a7fc6', '#c77bb4', '#ee5350'];

const dockIcons: { name: string; dot?: boolean; art: React.ReactNode }[] = [
  {
    name: 'finder', dot: true,
    art: <Art>
      <defs><linearGradient id="fL" x1="0" y1="0" x2="0" y2="1"><stop offset="0" stopColor="#30d5fb" /><stop offset="1" stopColor="#2173f0" /></linearGradient><linearGradient id="fR" x1="0" y1="0" x2="0" y2="1"><stop offset="0" stopColor="#fafafa" /><stop offset="1" stopColor="#dde8f5" /></linearGradient></defs>
      <rect x="7" y="10" width="74" height="68" rx="3" fill="url(#fL)" />
      <path d="M46 10h32q3 0 3 3v62q0 3-3 3H51q-1.500-12-1-28H38q0-24 8-40z" fill="url(#fR)" />
      <path d="M46 10q-8 16-8 40h12q-.5 16 1 28" fill="none" stroke="#24304a" strokeWidth="1.500" />
      <path d="M27 29v5M60 29v5" stroke="#16233c" strokeWidth="4" strokeLinecap="round" />
      <path d="M22 55q22 18 44 0" fill="none" stroke="#16233c" strokeWidth="2.500" strokeLinecap="round" />
    </Art>,
  },
  { name: 'siri', art: <SiriOrb className="h-[88px] w-[88px]" /> },
  {
    name: 'launchpad',
    art: <Art>
      <defs><linearGradient id="lp" x1="0" y1="0" x2="0" y2="1"><stop offset="0" stopColor="#c9d6da" /><stop offset="1" stopColor="#7c8080" /></linearGradient></defs>
      <circle cx="44" cy="44" r="38.500" fill="url(#lp)" stroke="#dfe5e8" strokeWidth="2.500" />
      <path d="M67 20q-20 2-30 17-9-2-12 1l-8 10 11-2 9 9 1 15 8-10q3-5 0-11 18-8 21-29z" fill="#47484a" />
      <circle cx="52" cy="36" r="5" fill="#b8c0c3" />
      <path d="M28 58q-8 2-8 14 8-3 12-10z" fill="#47484a" />
    </Art>,
  },
  {
    name: 'safari', dot: true,
    art: <Art>
      <defs><radialGradient id="sf"><stop offset="0" stopColor="#35c8f6" /><stop offset="1" stopColor="#1a6ee8" /></radialGradient></defs>
      <circle cx="44" cy="44" r="40" fill="#f2f2f4" /><circle cx="44" cy="44" r="36.500" fill="url(#sf)" />
      {ticks.map((a) => <path key={a} d="M44 9.500v5" stroke="#fff" strokeWidth="1.200" transform={`rotate(${a} 44 44)`} />)}
      <path d="M69 19 39 39l5 5z" fill="#f33" /><path d="M69 19 49 49l-5-5z" fill="#d0252b" />
      <path d="M20 69 39 39l5 5z" fill="#fff" /><path d="M20 69 49 49l-5-5z" fill="#cfd4da" />
    </Art>,
  },
  {
    name: 'firefox', dot: true,
    art: <Art>
      <defs><radialGradient id="ffb" cx="45%" cy="25%"><stop offset="0" stopColor="#3fb3e6" /><stop offset="1" stopColor="#0c3f86" /></radialGradient><linearGradient id="ffo" x1="0" y1="0" x2="0" y2="1"><stop offset="0" stopColor="#f6921e" /><stop offset="1" stopColor="#dc4a20" /></linearGradient></defs>
      <circle cx="47" cy="39" r="36" fill="url(#ffb)" />
      <path d="M6 12q2 6 8 6 2-4 6-6 0 6 4 8 8 2 10 6l-2 6-8 4q0 8 10 12 8 2 12-2 6-1 4 5-6 8-14 8 10 6 22 0 18-10 16-36-2-8-6-14 16 10 20 32 2 22-16 36-20 12-42 4Q8 78 3 54 1 34 6 12z" fill="url(#ffo)" />
      <path d="M64 9q24 14 22 40-4 24-19 32 8-12 6-28 2-14-9-44z" fill="#fbd33c" />
    </Art>,
  },
  {
    name: 'skype',
    art: <Art>
      <defs><linearGradient id="sk" x1="0" y1="0" x2="0" y2="1"><stop offset="0" stopColor="#27b1ee" /><stop offset="1" stopColor="#1b9bdc" /></linearGradient></defs>
      <circle cx="44" cy="44" r="37" fill="#20a6e5" /><circle cx="25" cy="24" r="22" fill="#24abea" /><circle cx="62" cy="64" r="22" fill="#1d9fe0" />
      <circle cx="44" cy="44" r="35" fill="url(#sk)" />
      <path d="M60 32q-3-10-16-10-15 0-15 11 0 8 15 11 16 3 16 11 0 11-16 11-14 0-17-12" fill="none" stroke="#fff" strokeWidth="9" strokeLinecap="round" />
    </Art>,
  },
  {
    name: 'mail', dot: true,
    art: <div className="relative"><Art>
      <g transform="rotate(-8 44 44)">
        <rect x="12" y="7" width="62" height="76" fill="#fff" stroke="#fff" strokeWidth="4" strokeDasharray="3 2.500" />
        <rect x="17" y="12" width="52" height="66" fill="#3f8fe0" /><path d="M17 52h52v26H17z" fill="#7db9ee" opacity=".6" />
        <path d="M25 18q2-4 7-2 6 10 9 22l8 9 11 0 4 6-8 2-6 8-8 2-2 6-5-4 2-11q-13-10-12-38z" fill="#5b4632" /><path d="M40 46l14 3-6 12-8-4z" fill="#b2935f" /><path d="M54 46l8 1-2 4z" fill="#f2ead8" />
      </g>
      <circle cx="66" cy="68" r="17" fill="none" stroke="#5b6c80" strokeWidth="2" opacity=".55" /><circle cx="66" cy="68" r="10" fill="#5b6c80" opacity=".35" />
    </Art>
      <div className={`absolute -top-[1px] left-[57px] flex h-[35px] w-[35px] items-center justify-center rounded-full bg-[#fb4039] text-[21px] text-white ${SF}`}>2</div>
    </div>,
  },
  {
    name: 'contacts',
    art: <Art>
      <path d="m66 14 6 0v22h-6z" fill="#ddd" /><path d="M68 30h6v14h-6z" fill="#3aa0d8" /><path d="M70 45h6v14h-6z" fill="#3fc46a" /><path d="M71 60h7v13h-7z" fill="#f0a020" />
      <path d="M9 15 60 3q5-1 5 4l8 63q0 4-4 5L23 86q-4 1-5-4z" fill="#b98f4b" /><path d="M9 15 12 14l10 71-4-2z" fill="#8d6a34" />
      <circle cx="41" cy="41" r="19" fill="none" stroke="#a07a3c" strokeWidth="1.500" /><path d="M28 53q3-8 8-9-4-14 5-14t6 13q6 2 8 9-14 12-27 1z" fill="#a07a3c" />
    </Art>,
  },
  {
    name: 'calendar',
    art: <Art>
      <g transform="rotate(-8 44 44)"><rect x="12" y="12" width="64" height="70" rx="2" fill="#51606c" /><rect x="13" y="8" width="62" height="68" rx="2" fill="#fbfbfb" /><path d="M13 8h62v17H13z" fill="#e5413f" />
        <text x="44" y="22" textAnchor="middle" fontFamily="Inter" fontSize="15" fill="#fff">NOV</text>
        <text x="44" y="64" textAnchor="middle" fontFamily="Inter" fontWeight="300" fontSize="41" textLength="45" lengthAdjust="spacingAndGlyphs" fill="#222">20</text></g>
    </Art>,
  },
  {
    name: 'notes',
    art: <Art>
      <path d="m7 13 60-10 11 76-60 9z" fill="#fafafa" /><path d="m7 13 60-10 2 13L9 26z" fill="#fbd13b" />
      {[0, 1, 2, 3, 4, 5, 6, 7, 8].map((i) => <path key={i} d={`M${11 + i} ${34 + i * 6}l59-10`} stroke="#d4d4d4" strokeWidth="1.200" />)}
    </Art>,
  },
  {
    name: 'reminders',
    art: <Art>
      <path d="m12 17 50-13q6-1 7 5l9 63q1 6-5 7L27 89q-6 1-7-5z" fill="#2e3237" /><path d="M9 16 58 3q6-1 7 5l10 62q1 6-5 8L24 86q-6 1-7-5L7 22q0-5 2-6z" fill="#fcfcfc" />
      {['#f7922d', '#2aa5f4', '#66d83e', '#c86fe0'].map((c, i) => <g key={c}><circle cx={18 + i * 2.200} cy={27 + i * 14} r="5.500" fill={c} /><path d={`M${30 + i * 2} ${23 + i * 14}l32-8`} stroke="#ccc" strokeWidth="1.200" /></g>)}
    </Art>,
  },
  {
    name: 'maps',
    art: <Art>
      <g transform="translate(0 2)"><path d="m4 14 64-11 8 66-64 11z" fill="#f5f3ee" /><path d="m7 17 20-3 10 62-22 3z" fill="#e8d4d4" /><path d="m30 13 35-6 6 50q-30-4-41-44z" fill="#9fdb88" /><path d="m18 16 9-2 6 38-9 2z" fill="#3f8fd8" /><path d="m8 38 62 34-18 4L10 50z" fill="#f8c93c" /><path d="M44 10q2 26 28 36" fill="none" stroke="#f5f3ee" strokeWidth="7" /></g>
      <circle cx="27" cy="51" r="11" fill="#1b88e0" /><path d="m27 43 5 15-5-4-5 4z" fill="#fff" />
      <circle cx="66" cy="60" r="20" fill="#eeeef0" /><circle cx="66" cy="60" r="12" fill="none" stroke="#7fa6bd" strokeWidth="1.500" />
      <text x="66" y="65" textAnchor="middle" fontFamily="Inter" fontSize="12" fill="#444">3D</text><path d="m66 42 3 5h-6z" fill="#e33" />
    </Art>,
  },
  {
    name: 'photos',
    art: <Art>
      <circle cx="44" cy="44" r="39.500" fill="#f1efec" />
      {petals.map((c, i) => <rect key={c} x="34" y="10" width="20" height="33" rx="10" fill={c} className="mix-blend-multiply" opacity=".92" transform={`rotate(${i * 45} 44 44)`} />)}
      <circle cx="44" cy="44" r="2.500" fill="#fff" />
    </Art>,
  },
  {
    name: 'messages',
    art: <Art>
      <defs><linearGradient id="mg" x1="0" y1="0" x2="0" y2="1"><stop offset="0" stopColor="#5fc5fb" /><stop offset="1" stopColor="#1f83f6" /></linearGradient></defs>
      <path d="M44 8c22 0 39 14 39 33S66 74 44 74q-6 0-11-1-6 5-14 6 4-5 4-11Q5 58 5 41C5 22 22 8 44 8z" fill="url(#mg)" />
      <path d="M58 39q24 2 24 20 0 8-7 14 1 5 4 8-7-1-11-4-4 1-10 1-23-2-23-20t23-19z" fill="#eef5fc" />
      <circle cx="47" cy="59" r="3.800" fill="#134f9c" /><circle cx="59" cy="59" r="3.800" fill="#134f9c" /><circle cx="71" cy="59" r="3.800" fill="#134f9c" />
    </Art>,
  },
  {
    name: 'facetime',
    art: <Art>
      <defs><linearGradient id="ft" x1="0" y1="0" x2="0" y2="1"><stop offset="0" stopColor="#4be373" /><stop offset="1" stopColor="#20c53c" /></linearGradient></defs>
      <rect x="4" y="10" width="70" height="63" rx="8" fill="url(#ft)" /><rect x="16" y="26" width="35" height="30" rx="5" fill="#f7f7f7" /><path d="m53 36 12-8v26l-12-8z" fill="#f2f2f2" />
      <circle cx="64" cy="59" r="19.500" fill="#f0f3f0" /><path d="M55 48q-5 4 0 13t14 10q7-1 6-5l-6-4-4 3q-5-4-6-9l3-3-3-6z" fill="#2bcc47" />
    </Art>,
  },
  {
    name: 'pages',
    art: <Art>
      <path d="m6 12 56-10 14 76-60 10z" fill="#fcfcfc" /><path d="M6 12 62 2l3 13L9 25z" fill="#f7941e" />
      <text x="12" y="22" fontFamily="Lato" fontSize="10" fill="#fff" transform="rotate(-10 12 22)">PAGES</text>
      <path d="m15 31 26-5 4 21-26 4z" fill="#2c7bd4" /><path d="M22 32q6 2 8 8 1-8 8-10-1 8-6 12-6 0-10-10z" fill="#f79a24" />
      {[0, 1, 2, 3, 4, 5, 6].map((i) => <path key={i} d={`M${20 + i * .7} ${55 + i * 4}l40-7`} stroke="#999" strokeWidth="1.200" />)}
      <path d="m70 3 6 2-22 66-5-2z" fill="#f0952a" /><path d="m54 60 6 2-9 25-1-1z" fill="#444" />
    </Art>,
  },
  {
    name: 'numbers',
    art: <Art>
      <path d="M5 49h76l2 32H4z" fill="#f8f8f8" />
      <rect x="16" y="45" width="14" height="28" fill="#e63950" /><rect x="32" y="30" width="14" height="43" fill="#f5922a" /><rect x="48" y="9" width="14" height="64" fill="#2fc04c" /><rect x="64" y="22" width="14" height="51" fill="#2b8ff0" />
      <path d="M16 45h14v4H16zM32 30h14v4H32zM48 9h14v4H48zM64 22h14v4H64z" fill="#fff" opacity=".35" />
    </Art>,
  },
  {
    name: 'keynote',
    art: <Art>
      <path d="M41 37h5v42h-5z" fill="#cfd6dc" /><ellipse cx="44" cy="79" rx="17" ry="6" fill="#c4ced6" />
      <path d="M14 5h60l6 30H8z" fill="#2196ea" /><path d="M8 35h72v4H8z" fill="#1567a8" /><path d="M22 10h44l2 21H20z" fill="#fff" />
      <circle cx="34" cy="22" r="7.500" fill="#2ba3e0" /><path d="M34 22v-7.500a7.500 7.500 0 0 1 7.500 7.500zM34 22l-5 6a7.500 7.500 0 0 0 11 0z" fill="#e84d7a" /><path d="M48 17h14M48 21h14M48 25h14" stroke="#bbb" strokeWidth="1.500" />
      <text x="25" y="14.500" fontFamily="Inter" fontWeight="800" fontSize="4.500" fill="#333">KEYNOTE</text>
    </Art>,
  },
  {
    name: 'itunes',
    art: <Art>
      <defs><linearGradient id="itr" x1="0" y1="0" x2=".6" y2="1"><stop offset="0" stopColor="#f35a9a" /><stop offset=".5" stopColor="#b062e8" /><stop offset="1" stopColor="#35c8f5" /></linearGradient><linearGradient id="itn" x1="1" y1="0" x2="0" y2="1"><stop offset="0" stopColor="#f8435f" /><stop offset=".5" stopColor="#b860e8" /><stop offset="1" stopColor="#2fb8f5" /></linearGradient></defs>
      <circle cx="44" cy="44" r="38.500" fill="#fafafc" stroke="url(#itr)" strokeWidth="3" />
      <path d="M33 26 62 20v37q0 7-8 8-7 0-7-5 0-6 8-7l2-1V33l-19 4v26q0 7-8 8-7 0-7-5 0-6 8-7l2-1z" fill="url(#itn)" />
    </Art>,
  },
  {
    name: 'ibooks',
    art: <Art>
      <defs><linearGradient id="ib" x1="0" y1="0" x2="0" y2="1"><stop offset="0" stopColor="#fdbb2c" /><stop offset="1" stopColor="#e24a17" /></linearGradient></defs>
      <circle cx="44" cy="44" r="40" fill="#f4ede6" /><circle cx="44" cy="44" r="36.500" fill="url(#ib)" />
      <path d="M43 28q-8-5-22 0v33q14-5 22 3zM45 28q8-5 22 0v33q-14-5-22 3z" fill="#f8f6f2" />
    </Art>,
  },
  {
    name: 'appstore',
    art: <Art>
      <defs><linearGradient id="as" x1="0" y1="0" x2="0" y2="1"><stop offset="0" stopColor="#24c1fb" /><stop offset="1" stopColor="#1e6bf0" /></linearGradient></defs>
      <circle cx="44" cy="44" r="40" fill="#f2f3f6" /><circle cx="44" cy="44" r="36.500" fill="url(#as)" />
      <path d="M48 21 32 50M40 21l23 41M27 60l-2 3M21 51h20M54 51h13" stroke="#fff" strokeWidth="6.500" strokeLinecap="round" />
    </Art>,
  },
  {
    name: 'preferences',
    art: <Art>
      <defs><linearGradient id="sp" x1="0" y1="0" x2="0" y2="1"><stop offset="0" stopColor="#c8d4da" /><stop offset="1" stopColor="#6d6f70" /></linearGradient></defs>
      <rect x="5" y="8" width="78" height="72" rx="4" fill="url(#sp)" /><circle cx="44" cy="44" r="32" fill="#353637" />
      <circle cx="44" cy="44" r="26" fill="none" stroke="#b9bbbc" strokeWidth="5" strokeDasharray="3 2.400" /><circle cx="44" cy="44" r="21" fill="none" stroke="#a9abac" strokeWidth="6" />
      <path d="M44 44h20M44 44 34 27M44 44 34 61" stroke="#a9abac" strokeWidth="6" /><circle cx="44" cy="44" r="6" fill="#c8caca" />
    </Art>,
  },
  {
    name: 'terminal', dot: true,
    art: <Art>
      <rect x="5" y="9" width="77" height="68" rx="4" fill="#d2d2d2" /><rect x="6.500" y="10.500" width="74" height="65" rx="3" fill="#111" /><rect x="10" y="14" width="67" height="58" fill="#333" />
      <path d="m14 21 10 5-10 5" fill="none" stroke="#fff" strokeWidth="3" /><path d="M26 34h11" stroke="#fff" strokeWidth="2.500" />
    </Art>,
  },
  {
    name: 'acrobat', dot: true,
    art: <Art>
      <defs><linearGradient id="ac" x1="0" y1="0" x2="0" y2="1"><stop offset="0" stopColor="#4a1208" /><stop offset="1" stopColor="#1c0300" /></linearGradient></defs>
      <rect x="3" y="3" width="82" height="81" fill="url(#ac)" stroke="#f9301a" strokeWidth="3.500" />
      <path d="M20 64q2-9 22-16t27 1q-2 8-14 1-14-9-16-23-1-11 4-11t2 12q-4 22-14 35-8 8-11 1z" fill="none" stroke="#fff" strokeWidth="3" />
    </Art>,
  },
];

function Dock() {
  return (
    <div className="flex h-[122px] w-[2724px] rounded-t-[16px] bg-[linear-gradient(90deg,#8d7069_0%,#b47a68_7%,#cd8163_16%,#cb7d58_27%,#c67838_32%,#e5852f_40%,#ee8a30_52%,#f09329_64%,#ea8430_73%,#f08730_82%,#c58432_89%,#927838_94%,#a67a38_97%,#b87d3c_100%)] pl-[9px]">
      {dockIcons.map(({ name, dot, art }) => (
        <div key={name} className="flex w-[98.600px] flex-col items-center pt-[13px]">
          {art}
          {dot && <div className="mt-[9px] h-2 w-2 rounded-full bg-[#4a0d05]" />}
        </div>
      ))}
      <div className="mr-[20px] ml-[22px] mt-4 h-[90px] w-0.5 bg-[#9c6412]" />
      <div className="flex w-[98.600px] justify-center pt-[13px]">
        <Art>
          <path d="M20 3h27l8 8h12v40H20z" fill="#e8e8e8" /><path d="M15 11h36l20 28v46H15z" fill="#fbfbfb" /><path d="M51 11q2 24 20 28z" fill="#cfcfcf" />
          <path d="M40 11h8v38q-4 6-8 0z" fill="#555" /><path d="M44 11v38" stroke="#ddd" strokeWidth="3" strokeDasharray="2 2" />
          <text x="43" y="81" textAnchor="middle" fontFamily="Inter" fontSize="12" fill="#666">BZ</text>
        </Art>
      </div>
      <div className="flex w-[98.600px] justify-center pt-[13px]">
        <Art>
          <rect x="1" y="21" width="85" height="46" fill="#fdfdfd" /><path d="M1 21h85v5H1z" fill="#dcdadc" /><path d="M1 26h13v41H1z" fill="#e8e8ea" />
          {[0, 1, 2, 3, 4, 5, 6].map((i) => <path key={i} d={`M17 ${30 + i * 5}h19M4 ${30 + i * 5}h7`} stroke="#bbb" strokeWidth="1.500" />)}
          <path d="M38 26v41" stroke="#ccc" /><g transform="rotate(-8 70 70)"><rect x="59" y="57" width="23" height="28" fill="#fff" /><rect x="61" y="59" width="19" height="24" fill="#3f8fe0" /><path d="m64 62 5 8 8 3-6 4-2 4q-6-8-5-19z" fill="#5b4632" /></g>
        </Art>
      </div>
      <div className="flex w-[98.600px] justify-center pt-[13px]">
        <Art>
          <path d="M12 12h64l-7 68q-1 6-8 6H27q-7 0-8-6z" fill="#dfe0e2" /><path d="M22 20q14 20 44 4l-5 56H28z" fill="#e9eaeb" />
          <ellipse cx="44" cy="14" rx="32" ry="8" fill="#b9bbbd" /><path d="m18 12 8-8 10 4 8-6 12 5 10 6-8 8-30 2z" fill="#f2f2f2" /><path d="m24 14 9-5 6 9zM50 8l10 4-8 6z" fill="#4d5b63" /><path d="m36 10 8-2 2 7z" fill="#2eb8a8" /><path d="m46 14 6-6 3 8z" fill="#3269b0" />
        </Art>
      </div>
    </div>
  );
}

/* --------------------------------------------------------------------- app */

export default function App() {
  return (
    <div className="relative flex h-[1800px] w-[2880px] flex-col overflow-hidden bg-[repeating-linear-gradient(180deg,#00000055_0_3px,transparent_3px_7px,#00000033_7px_10px,transparent_10px_15px),linear-gradient(90deg,#4a3028_0%,#3d2419_4%,#4a2a12_50%,#76501a_97%,#6e4812_100%)]">
      <MenuBar />
      <BrowserToolbar />
      <TabBar />
      <AdminBar />
      <div className="relative h-[1432px] shrink-0 overflow-hidden rounded-b-[10px]">
        <Backdrop />
        <Overlay />
        <div className="absolute top-0 right-[4px] h-[163px] w-[15px] rounded-b-[8px] border-2 border-t-0 border-[#5a5a5a] bg-[#1c1c1c]" />
        <div className="absolute inset-x-0 bottom-0 h-[90px] bg-linear-to-b from-transparent to-black/7" />
      </div>
      <div className="mt-0.5 flex pl-[78px]">
        <Dock />
      </div>
    </div>
  );
}
